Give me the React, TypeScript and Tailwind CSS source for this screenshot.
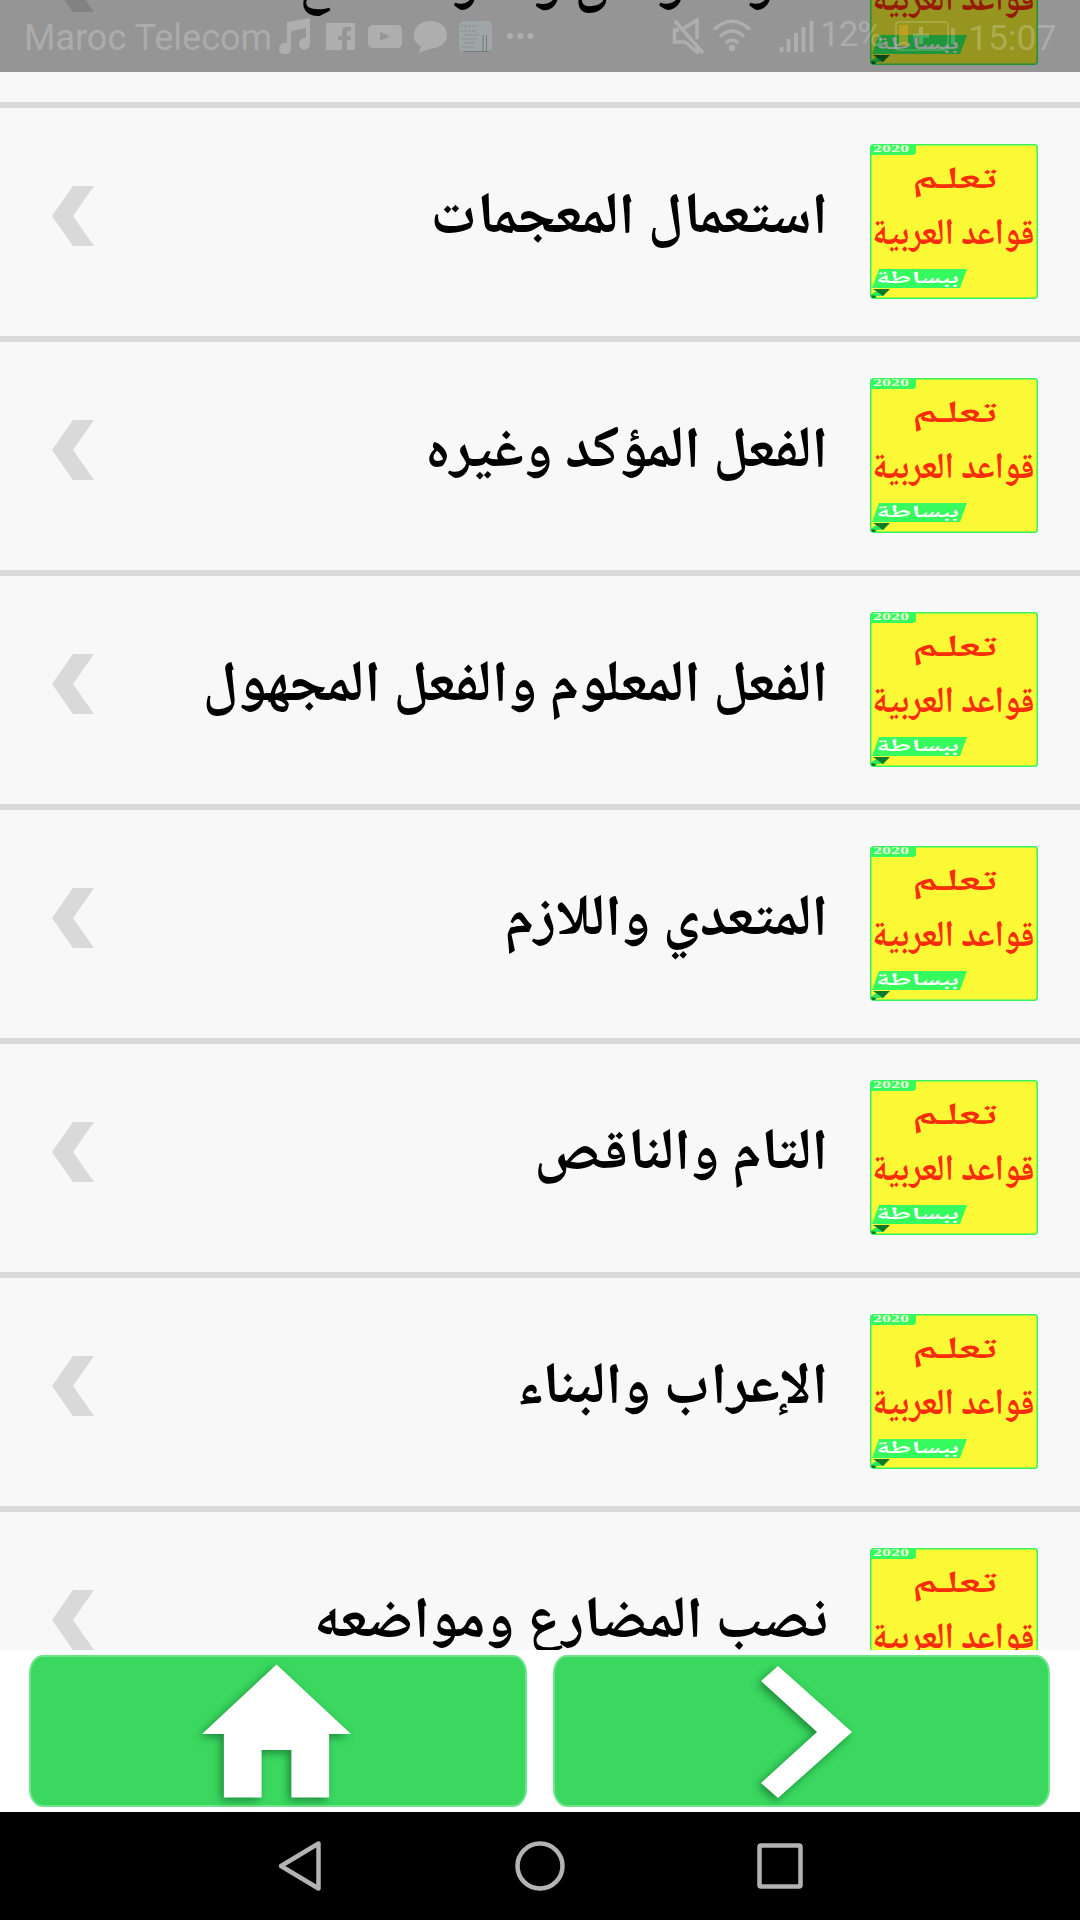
const lessons = [
  { title: 'همزة الوصل وهمزة القطع' },
  { title: 'استعمال المعجمات' },
  { title: 'الفعل المؤكد وغيره' },
  { title: 'الفعل المعلوم والفعل المجهول' },
  { title: 'المتعدي واللازم' },
  { title: 'التام والناقص' },
  { title: 'الإعراب والبناء' },
  { title: 'نصب المضارع ومواضعه' },
]

function LessonLogo() {
  return (
    <svg className="h-[155px] w-[168px] shrink-0 font-['Noto_Naskh_Arabic','DejaVu_Sans',serif] font-bold" viewBox="0 0 168 155">
      <rect x="0.75" y="0.75" width="166.5" height="153.5" rx="3" fill="#fbf935" stroke="#35f45c" strokeWidth="1.5" />
      <path d="M1 1H46V8Q46 11 42 11H1Z" fill="#35fb5f" />
      <text x="3" y="8.3" fontSize="9.5" textLength="36" lengthAdjust="spacingAndGlyphs" fill="#e9ffd8" fontFamily="Liberation Serif, serif">2020</text>
      <text x="84.5" y="44" fontSize="31" textAnchor="middle" textLength="85" lengthAdjust="spacingAndGlyphs" fill="#f92d0b">تعلـم</text>
      <text x="83.5" y="100" fontSize="37" textAnchor="middle" textLength="162" lengthAdjust="spacingAndGlyphs" fill="#f92d0b">قواعد العربية</text>
      <path d="M9 125H97L90 144H2Z" fill="#35fb5f" />
      <text x="47.5" y="139" fontSize="17" textAnchor="middle" textLength="83" lengthAdjust="spacingAndGlyphs" fill="#fff">ببساطة</text>
      <path d="M2 150Q5 147 9 147L14 152L7 152L5 154H1Z" fill="#2ee85a" />
      <path d="M3 145H20L13 152Z" fill="#0d7a2b" />
      <path d="M1 151L6 152L5 154H2Z" fill="#0d7a2b" />
    </svg>
  )
}

function LessonRow({ title }: { title: string }) {
  return (
    <li className="flex h-[234px] shrink-0 items-start border-b-[6px] border-[#d9d9d9] bg-[#f8f8f8] pl-[52px] pr-[42px] pt-9">
      <svg className="mt-[42px] h-[60px] w-[42px] shrink-0" viewBox="0 0 42 60" fill="#d9d9d9">
        <path d="M21 0H42L21 30L42 60H21L0 30Z" />
      </svg>
      <p dir="rtl" className="mr-[42px] mt-[37px] flex-1 whitespace-nowrap font-['Noto_Naskh_Arabic','DejaVu_Sans',serif] text-[58px] leading-[80px] font-bold text-black">{title}</p>
      <LessonLogo />
    </li>
  )
}

function StatusBar() {
  return (
    <div className="absolute inset-x-0 top-0 flex h-[72px] items-start bg-black/40 pl-[24px] font-[Roboto,sans-serif] text-[35.5px] leading-[42px] text-white/22">
      <span className="mt-[17px] w-[255px] whitespace-nowrap text-[36px]">Maroc Telecom</span>
      <svg className="mt-[18px] h-9 w-[260px] shrink-0" viewBox="0 0 260 36" fill="#fff">
        <g opacity="0.24">
          <path d="M8 4L31 0V26A5.5 6 0 1 1 27 20V10L12 13V30A6 6 0 1 1 8 25Z" />
          <path fillRule="evenodd" d="M47 5H76V32H68V22H72V18H68V15Q68 13 70 13H72V9H68Q63 9 63 14V18H59V22H63V32H47Z" />
          <path fillRule="evenodd" d="M94 7H118Q123 7 123 12V25Q123 30 118 30H94Q89 30 89 25V12Q89 7 94 7ZM101 14V23L111 18.5Z" />
          <path d="M151.5 3C161 3 168 9 168 17S161 30 150 31L140 35L142 28C137 26 135 22 135 17C135 9 142 3 151.5 3Z" />
          <circle cx="231" cy="18" r="3" />
          <circle cx="241.5" cy="18" r="3" />
          <circle cx="251.5" cy="18" r="3" />
        </g>
        <rect x="180" y="3" width="33" height="31" rx="5" fill="#a0a5a5" />
        <path d="M181 8H199M181 13H196M185 17H200M183 21H198M185 25H197M183 29H195" stroke="#83928f" strokeWidth="1" strokeDasharray="3 1" />
        <path d="M204 17V33M207.5 17V33M184 33.5H210" stroke="#757a78" strokeWidth="1" />
      </svg>
      <svg className="ml-[131px] mt-[18px] h-9 w-[147px] shrink-0" viewBox="0 0 147 36" fill="none" stroke="#fff">
        <g opacity="0.24">
          <path d="M5 3L33 35" strokeWidth="3.5" />
          <path d="M14 10L27 2V21M27 29V34L15 24H4.5V12H9" strokeWidth="3.5" />
          <path d="M44 11.5Q62 -5 80 11.5M50 18.5Q62 7.5 74 18.5M56 25Q62 19 68 25" strokeWidth="3.5" />
          <circle cx="62" cy="30" r="3.2" fill="#fff" stroke="none" />
          <path d="M111.5 29V34M118.5 21V34M126 15V34M133.5 9V34M141.5 3V34" strokeWidth="4" />
        </g>
      </svg>
      <span className="ml-[3px] mt-[14px] w-[74px] shrink-0 whitespace-nowrap text-[35px] tracking-[-1px]">12%</span>
      <svg className="mt-5 h-8 w-[62px] shrink-0" viewBox="0 0 62 32">
        <rect x="2" y="2" width="52" height="28" rx="3" fill="none" stroke="#fff" strokeOpacity="0.16" strokeWidth="2" />
        <rect x="5" y="5" width="9" height="21" fill="#d2a81e" fillOpacity="0.6" />
        <path d="M27 7V24M19 15.500H35" stroke="#fff" strokeOpacity="0.22" strokeWidth="4" />
        <path d="M59 8V24" stroke="#fff" strokeOpacity="0.2" strokeWidth="4" />
      </svg>
      <span className="ml-[12px] mt-[17px] shrink-0 whitespace-nowrap">15:07</span>
    </div>
  )
}

export default function App() {
  return (
    <div className="flex h-[1920px] w-[1080px] flex-col overflow-hidden bg-white">
      <main className="relative h-[1650px] shrink-0 overflow-hidden bg-[#f8f8f8]">
        <ul className="-mt-[126px] flex flex-col">
          {lessons.map((item) => (
            <LessonRow key={item.title} title={item.title} />
          ))}
        </ul>
        <StatusBar />
      </main>

      <div className="flex h-[162px] shrink-0 gap-[26px] bg-white pl-[29px] pr-[30px] pt-[5px]">
        <button className="flex h-[152px] flex-1 justify-center rounded-[14px/18px] border-2 border-[#6fe48a] bg-[#3ad85f]">
          <svg className="-ml-[2px] mt-[7px] h-[136px] w-[149px] drop-shadow-[-3px_3px_4px_rgba(0,60,20,0.5)]" viewBox="0 0 150 136" fill="#fff">
            <path d="M75 0L150 70H128V134H90V86H60V134H22V70H0Z" />
          </svg>
        </button>
        <button className="flex h-[152px] flex-1 justify-center rounded-[14px/18px] border-2 border-[#6fe48a] bg-[#3ad85f]">
          <svg className="ml-[11px] mt-[9px] h-[132px] w-[91px] drop-shadow-[-3px_3px_4px_rgba(0,60,20,0.5)]" viewBox="0 0 91 132" fill="#fff">
            <path d="M17 0L91 66L17 132L0 117L56 66L0 15Z" />
          </svg>
        </button>
      </div>

      <nav className="flex h-[108px] shrink-0 items-center gap-[190px] bg-black pl-[275px]">
        <svg className="h-[54px] w-[50px]" viewBox="0 0 50 54" fill="none" stroke="#b3b3b3" strokeWidth="4.5" strokeLinejoin="round">
          <path d="M43.5 4.5V49.5L6 27Z" />
        </svg>
        <svg className="h-[50px] w-[50px]" viewBox="0 0 50 50" fill="none" stroke="#b3b3b3" strokeWidth="4.5">
          <circle cx="25" cy="25" r="22.5" />
        </svg>
        <svg className="h-[50px] w-[50px]" viewBox="0 0 50 50" fill="none" stroke="#b3b3b3" strokeWidth="4.5">
          <rect x="4.5" y="4.5" width="41" height="41" rx="1.5" />
        </svg>
      </nav>
    </div>
  )
}
